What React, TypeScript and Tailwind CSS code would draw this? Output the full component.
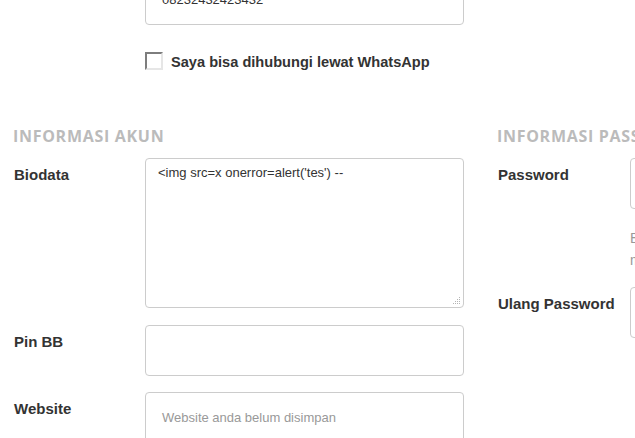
import React from "react";

const sans = { fontFamily: '"Liberation Sans", Arial, sans-serif' };

const Label = ({ children, w }: { children: React.ReactNode; w: string }) => (
  <div className={`${w} shrink-0 pt-[7px] pl-[1px] text-[15px] leading-[20px] font-bold text-[#333]`}>{children}</div>
);

const Input = ({ value, placeholder }: { value?: string; placeholder?: string }) => (
  <div className="w-[319px] h-[51px] shrink-0 rounded-[4px] border border-[#cccccc] bg-white flex items-center pl-4 text-[13px]">
    {value ? <span className="text-[#333]">{value}</span> : <span className="text-[#999]">{placeholder}</span>}
  </div>
);

const Heading = ({ children }: { children: React.ReactNode }) => (
  <div
    className="text-[16px] leading-[22px] font-bold tracking-[0.7px] text-[#bbbbbb] whitespace-nowrap"
    style={{ fontFamily: '"Open Sans", sans-serif' }}
  >
    {children}
  </div>
);

const Grip = () => (
  <svg className="absolute right-[2px] bottom-[2px]" width="9" height="9" viewBox="0 0 9 9">
    {[
      [7, 1],
      [7, 3],
      [5, 3],
      [7, 5],
      [5, 5],
      [3, 5],
      [7, 7],
      [5, 7],
      [3, 7],
      [1, 7],
    ].map(([x, y], i) => (
      <rect key={i} x={x} y={y} width="1" height="1" fill="#b5b5b5" />
    ))}
  </svg>
);

export default function App() {
  return (
    <div className="w-[635px] h-[438px] overflow-hidden bg-white" style={sans}>
      <div className="-mt-[26px]">
        {/* phone field, mostly scrolled out */}
        <div className="flex pl-[13px]">
          <div className="w-[132px] shrink-0" />
          <Input value="08232432423432" />
        </div>

        <div className="flex pl-[145px] mt-[27px] items-start gap-2">
          <div className="w-[18px] h-[18px] border-2 border-t-[#7d7d7d] border-l-[#7d7d7d] border-r-[#e6e6e6] border-b-[#e6e6e6] bg-white" />
          <span className="text-[14.6px] leading-[20px] font-bold text-[#333]">Saya bisa dihubungi lewat WhatsApp</span>
        </div>

        <div className="flex mt-[53px]">
          {/* akun */}
          <div className="w-[484px] shrink-0 pl-[13px]">
            <Heading>INFORMASI AKUN</Heading>
            <div className="flex mt-[11px]">
              <Label w="w-[132px]">Biodata</Label>
              <div className="relative w-[319px] h-[150px] rounded-[4px] border border-[#cccccc] pl-3 pt-[4px] text-[13px] leading-[20px] text-[#333]">
                {"<img src=x onerror=alert('tes') --"}
                <Grip />
              </div>
            </div>
            <div className="flex mt-[17px]">
              <Label w="w-[132px]">Pin BB</Label>
              <Input />
            </div>
            <div className="flex mt-4">
              <Label w="w-[132px]">Website</Label>
              <Input placeholder="Website anda belum disimpan" />
            </div>
          </div>

          {/* password */}
          <div className="pl-[13px]">
            <Heading>INFORMASI PASSWORD</Heading>
            <div className="flex mt-[11px]">
              <Label w="w-[133px]">Password</Label>
              <Input />
            </div>
            <div className="pl-[133px] mt-[18px] text-[14px] leading-[22px] text-[#999] whitespace-nowrap">
              <div>Biarkan kosong jika tidak ingin</div>
              <div>mengubah password anda</div>
            </div>
            <div className="flex mt-[16px]">
              <Label w="w-[133px]">Ulang Password</Label>
              <Input />
            </div>
          </div>
        </div>
      </div>
    </div>
  );
}
